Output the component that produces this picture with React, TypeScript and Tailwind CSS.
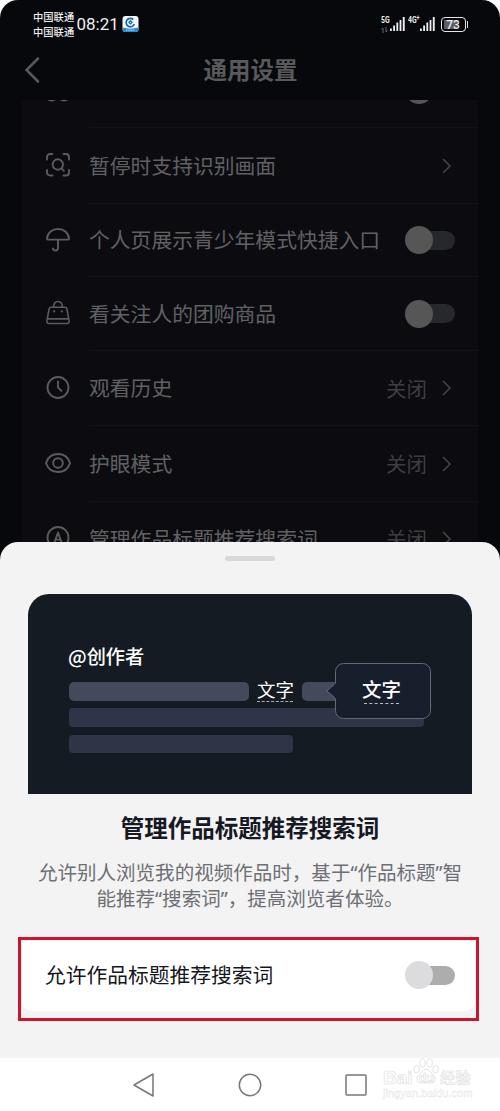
import type { ReactNode } from 'react';

const Icon = ({ children }: { children: ReactNode }) => (
  <svg width="26" height="26" viewBox="0 0 26 26" fill="none" stroke="currentColor" strokeWidth="1.9" strokeLinecap="round" strokeLinejoin="round" className="shrink-0">
    {children}
  </svg>
);

const InfinityIcon = () => (
  <Icon>
    <circle cx="6.500" cy="17.700" r="5.800" />
    <circle cx="19" cy="17.700" r="5.800" />
  </Icon>
);

const ScanIcon = () => (
  <Icon>
    <path d="M2 7.500V5a3 3 0 0 1 3-3h2.500M18.500 2H21a3 3 0 0 1 3 3v2.500M24 18v2.500a3 3 0 0 1-3 3h-2.500M7.500 23.500H5a3 3 0 0 1-3-3V18" />
    <circle cx="12.800" cy="12.500" r="5.200" />
    <path d="M16.600 16.400l2.300 2.400" />
  </Icon>
);

const UmbrellaIcon = () => (
  <Icon>
    <path d="M2 11.800C2.200 6 7 2 13 2s10.800 4 11 9.800c0 .5-.3.8-.8.8H2.800c-.5 0-.8-.3-.8-.8zM13 12.700v8.600a2.600 2.600 0 0 1-5.100.2" />
  </Icon>
);

const BagIcon = () => (
  <Icon>
    <path d="M6 7.300h14c1 0 1.700.6 1.900 1.500l2.200 12c.2 1.600-.6 2.700-2.100 2.700H4c-1.500 0-2.300-1.100-2.100-2.700l2.200-12c.2-.9.900-1.500 1.900-1.500zM8.500 7C8.700 3.500 10.300 1.500 13 1.500s4.300 2 4.500 5.500M2.300 18.900h21.400" strokeWidth="1.600" />
    <path d="M9.200 11.300v.1M16.800 11.300v.1" strokeWidth="2.200" />
  </Icon>
);

const ClockIcon = () => (
  <Icon>
    <circle cx="13" cy="12.500" r="10.500" />
    <path d="M13 6.500v6l3.500 3.400" />
  </Icon>
);

const EyeIcon = () => (
  <Icon>
    <path d="M1.300 12.200C3 7.500 7.300 4 13 4s10 3.500 11.700 8.200q.3.800 0 1.600C23 18.500 18.700 22 13 22S3 18.500 1.300 13.800q-.3-.8 0-1.600z" />
    <circle cx="13" cy="13" r="4.800" />
  </Icon>
);

const LetterIcon = () => (
  <Icon>
    <circle cx="13" cy="12.500" r="10.500" />
    <path d="M9.300 18L13 7.500 16.700 18M10.500 14.600h5" />
  </Icon>
);

const Chevron = () => (
  <svg width="10" height="16" viewBox="0 0 10 16" fill="none" stroke="#444447" strokeWidth="1.600" className="shrink-0">
    <path d="M1 1l7 7-7 7" />
  </svg>
);

const Toggle = ({ light = false }: { light?: boolean }) => (
  <span className="relative flex h-7 w-[50px] shrink-0 items-center">
    <span className={`ml-2 h-[19px] w-[42px] rounded-full ${light ? 'bg-[#adadae]' : 'bg-[#27282c]'}`} />
    <span className={`absolute left-0 top-0 size-7 rounded-full ${light ? 'bg-[#dcdcde]' : 'bg-[#565656]'}`} />
  </span>
);

type RowProps = { icon: ReactNode; label: string; height: string; kind: 'toggle' | 'link' | 'value'; lift?: string };

const Row = ({ icon, label, height, kind, lift = 'pb-[2px]' }: RowProps) => (
  <div className={`flex shrink-0 items-center pl-[23px] ${height}`}>
    <span className="flex pb-[2px] text-[#5c5c5f]">{icon}</span>
    <div className="ml-[18px] flex h-full grow items-center border-b border-[#131317] pr-[23px]">
      <span className={`whitespace-nowrap text-[20.8px] leading-7 text-[#616164] ${lift}`}>{label}</span>
      <span className="grow" />
      {kind === 'toggle' && <Toggle />}
      {kind === 'value' && <span className="mr-[15px] pb-px text-[20.500px] leading-7 text-[#3e3e42]">关闭</span>}
      {kind !== 'toggle' && <span className="mr-[3px]"><Chevron /></span>}
    </div>
  </div>
);

const Signal = () => (
  <svg width="15" height="15" viewBox="0 0 15 15" fill="#f1f1f1">
    <rect x="0" y="11.500" width="1.800" height="2.500" />
    <rect x="3.200" y="8.500" width="1.800" height="5.500" />
    <rect x="6.400" y="5.500" width="1.800" height="8.500" />
    <rect x="9.600" y="3" width="1.800" height="11" />
    <rect x="12.800" y="0" width="1.900" height="14" />
  </svg>
);

const StatusBar = () => (
  <div className="flex h-10 shrink-0 pl-[33px] text-[#efefef]">
    <div className="mt-[9px] w-[43px] whitespace-nowrap text-[10.3px] font-medium leading-[15px]">
      <div>中国联通</div>
      <div>中国联通</div>
    </div>
    <span className="ml-[0.500px] mt-[13px] w-[42px] font-['Roboto','Noto_Sans_CJK_SC',sans-serif] text-[17px] leading-[22px]">08:21</span>
    <svg className="ml-[3.500px] mt-4" width="17" height="16" viewBox="0 0 17 16">
      <rect x="0.500" width="16" height="16" rx="3" fill="#f4f8fc" />
      <path d="M.5 11.500c5 1.500 11 1.500 16 0V13a3 3 0 0 1-3 3h-10a3 3 0 0 1-3-3z" fill="#258bd6" />
      <path d="M4 14.200h9" stroke="#b9dcf4" strokeWidth="1" strokeDasharray="1.500 .7" />
      <path d="M11.300 3.600A4.200 4.200 0 1 0 12.300 8" fill="none" stroke="#1468ad" strokeWidth="1.700" />
      <path d="M8.500 3.800l2.500 2.500-2.500 2.500L6 6.300z" fill="#1468ad" />
      <path d="M8.500 5.500l.8.800-.8.800-.8-.8z" fill="#fff" />
    </svg>
    <span className="grow" />
    <div className="mr-[1px] mt-[17px] flex w-2 flex-col">
      <span className="origin-left scale-x-[0.78] whitespace-nowrap font-['Roboto',sans-serif] text-[8.8px] font-bold leading-[7px]">5G</span>
      <svg className="mt-[2.500px]" width="7" height="6" viewBox="0 0 7 6" fill="none" stroke="#65676b" strokeWidth="1"><path d="M2 6V1L.5 2.500M5 0v5l1.500-1.500" /></svg>
    </div>
    <div className="mt-[17px]"><Signal /></div>
    <span className="ml-[3px] mr-px mt-[17px] flex h-[7px] w-[11px] origin-left scale-x-[0.78] whitespace-nowrap font-['Roboto',sans-serif] text-[8.8px] font-bold leading-[7px]">
      4G<span className="-mt-[2px] text-[7px]">+</span>
    </span>
    <div className="mt-[17px]"><Signal /></div>
    <div className="ml-[6px] mt-[17px] flex h-[15px] w-[25px] items-center justify-center rounded-[4px] border-[1.500px] border-[#e6e6e6] font-['Roboto',sans-serif] text-[12px] font-medium leading-none">
      <span className="flex h-[9px] w-[19px] items-center justify-center bg-linear-to-r from-[#5c5d61] from-70% to-transparent to-70%">73</span>
    </div>
    <span className="ml-[1px] mr-[32px] mt-[21px] h-[7px] w-[1.500px] bg-[#dcdcdc]" />
  </div>
);

const Preview = () => (
  <div className="relative ml-[28px] mt-[33px] h-[200px] w-[444px] rounded-t-[21px] bg-[#141b22] pl-[41px] pt-[48px] text-white">
    <div className="-ml-px text-[19.2px] font-medium leading-7">@创作者</div>
    <div className="mt-3 flex h-[19px] items-start">
      <span className="h-[19px] w-[180px] rounded-[5px] bg-[#444a5b]" />
      <span className="ml-2 -mt-[5px] flex w-[37px] flex-col whitespace-nowrap text-[18.5px] leading-[24px]">
        文字
        <span className="w-[36px] border-b border-dashed border-[#a9adb6]" />
      </span>
      <span className="ml-2 h-[19px] w-[48px] rounded-[5px] bg-[#444a5b]" />
    </div>
    <div className="mt-[7px] h-[19px] w-[355px] rounded-[4px] bg-[#2f3547]" />
    <div className="mt-2 h-[18px] w-[224px] rounded-[4px] bg-[#2f3547]" />
    <div className="absolute left-[298px] top-[69px] flex h-[56px] w-[105px] flex-col items-center pl-[6px] pt-3">
      <svg className="absolute left-0 top-0" width="105" height="56" viewBox="0 0 105 56" fill="#181f2c" stroke="#646a79" strokeWidth="1">
        <path d="M17.500.5h79a8 8 0 0 1 8 8v39a8 8 0 0 1-8 8h-79a8 8 0 0 1-8-8V37q0-1.500-1.300-2.800L.8 28l7.400-6.500q1.300-1 1.300-2.500V8.500a8 8 0 0 1 8-8z" />
      </svg>
      <span className="relative text-[19.5px] font-medium leading-7">文字</span>
      <span className="relative w-[35px] border-b border-dashed border-[#b8bbc3]" />
    </div>
  </div>
);

const Watermark = () => (
  <div className="absolute left-[382px] top-[1056px] h-[46px] w-[92px] text-white">
    <svg className="absolute left-[31px] top-[2px]" width="27" height="27" viewBox="0 0 30 29" fill="#fff" stroke="#dedede" strokeWidth="1">
      <ellipse cx="4" cy="12" rx="3" ry="4.200" />
      <ellipse cx="10.500" cy="5" rx="3" ry="4.500" />
      <ellipse cx="18.500" cy="5" rx="3" ry="4.500" />
      <ellipse cx="25" cy="12" rx="3" ry="4.200" />
      <path d="M14.500 12c4 0 5 4 8 6.500s3.500 9-3 8.800c-4-.5-6-.5-10 0-6.500.2-6-6.300-3-8.800s4-6.500 8-6.500z" />
    </svg>
    <span className="absolute left-[1px] top-[10px] font-['Liberation_Sans',sans-serif] text-[19px] font-bold leading-6 [-webkit-text-stroke:0.600px_#dedede]">Bai</span>
    <span className="absolute left-[37px] top-[14px] font-['Liberation_Sans',sans-serif] text-[12px] font-bold leading-4 [-webkit-text-stroke:0.500px_#d9d9d9]">du</span>
    <span className="absolute left-[58px] top-[10px] whitespace-nowrap text-[15.300px] font-medium leading-5 [-webkit-text-stroke:0.500px_#dadada]">经验</span>
    <span className="absolute left-[1px] top-[30px] font-['Liberation_Sans',sans-serif] text-[11.100px] leading-[14px] [-webkit-text-stroke:0.400px_#e4e4e4]">jingyan.baidu.com</span>
  </div>
);

const Sheet = () => (
  <section className="h-[516px] shrink-0 rounded-t-[18px] bg-[#f3f3f3] pt-[14px]">
    <div className="mx-auto h-[5px] w-[50px] rounded-full bg-[#d8d8db]" />
    <Preview />
    <h2 className="mt-[17px] text-center text-[23.5px] font-bold leading-8 text-[#161823]">管理作品标题推荐搜索词</h2>
    <p className="mt-[17px] h-[51px] whitespace-nowrap text-center font-['Noto_Sans','Noto_Sans_CJK_SC',sans-serif] text-[19.55px] leading-[25.5px] text-[#6e6f74]">
      允许别人浏览我的视频作品时，基于“作品标题”智<br />能推荐“搜索词”，提高浏览者体验。
    </p>
    <div className="ml-[18px] mt-[26px] h-[84px] w-[461px] border-[3px] border-[#cb142e] p-px">
      <div className="flex h-[70px] items-center rounded-[4px] rounded-b-[10px] bg-white pl-[23px] pr-[20px]">
        <span className="grow pb-1 text-[20.75px] leading-7 text-[#16171c]">允许作品标题推荐搜索词</span>
        <span className="flex pb-[2px]"><Toggle light /></span>
      </div>
    </div>
  </section>
);

const NavBar = () => (
  <nav className="flex h-[53px] shrink-0 items-center justify-center gap-[82px] bg-white">
    <svg width="24" height="26" viewBox="0 0 24 26" fill="none" stroke="#777" strokeWidth="1.500" strokeLinejoin="round"><path d="M21 2v22L2 13z" /></svg>
    <svg width="24" height="24" viewBox="0 0 24 24" fill="none" stroke="#777" strokeWidth="1.500"><circle cx="12" cy="12" r="10.700" /></svg>
    <svg width="24" height="24" viewBox="0 0 24 24" fill="none" stroke="#777" strokeWidth="1.500"><rect x="2" y="2" width="20" height="20" rx="1" /></svg>
  </nav>
);

export default function App() {
  return (
    <div lang="zh-CN" className="relative flex h-[1111px] w-[500px] flex-col overflow-hidden rounded-t-[18px] bg-[#07080c] font-['Noto_Sans_CJK_SC',sans-serif]">
      <StatusBar />
      <header className="flex h-[60px] shrink-0 items-center pl-6 pr-[39px]">
        <svg width="16" height="26" viewBox="0 0 16 26" fill="none" stroke="#58595c" strokeWidth="2.500" strokeLinecap="round"><path d="M14 1.500L2.500 13 14 24.500" /></svg>
        <h1 className="grow pb-[2px] text-center text-[23.5px] font-bold leading-8 text-[#59595c]">通用设置</h1>
      </header>
      <main className="mx-[22px] flex h-[442px] shrink-0 flex-col overflow-hidden bg-[#0b0b10]">
        <div className="-mt-[47px] shrink-0">
          <Row icon={<InfinityIcon />} label="内容偏好与智能推荐" height="h-[75px]" kind="toggle" lift="pb-[2px]" />
        </div>
        <Row icon={<ScanIcon />} label="暂停时支持识别画面" height="h-[76px]" kind="link" />
        <Row icon={<UmbrellaIcon />} label="个人页展示青少年模式快捷入口" height="h-[73px]" kind="toggle" />
        <Row icon={<BagIcon />} label="看关注人的团购商品" height="h-[74px]" kind="toggle" />
        <Row icon={<ClockIcon />} label="观看历史" height="h-[75px]" kind="value" />
        <Row icon={<EyeIcon />} label="护眼模式" height="h-[76px]" kind="value" />
        <Row icon={<LetterIcon />} label="管理作品标题推荐搜索词" height="h-[74px]" kind="value" />
      </main>
      <Sheet />
      <NavBar />
      <Watermark />
    </div>
  );
}
